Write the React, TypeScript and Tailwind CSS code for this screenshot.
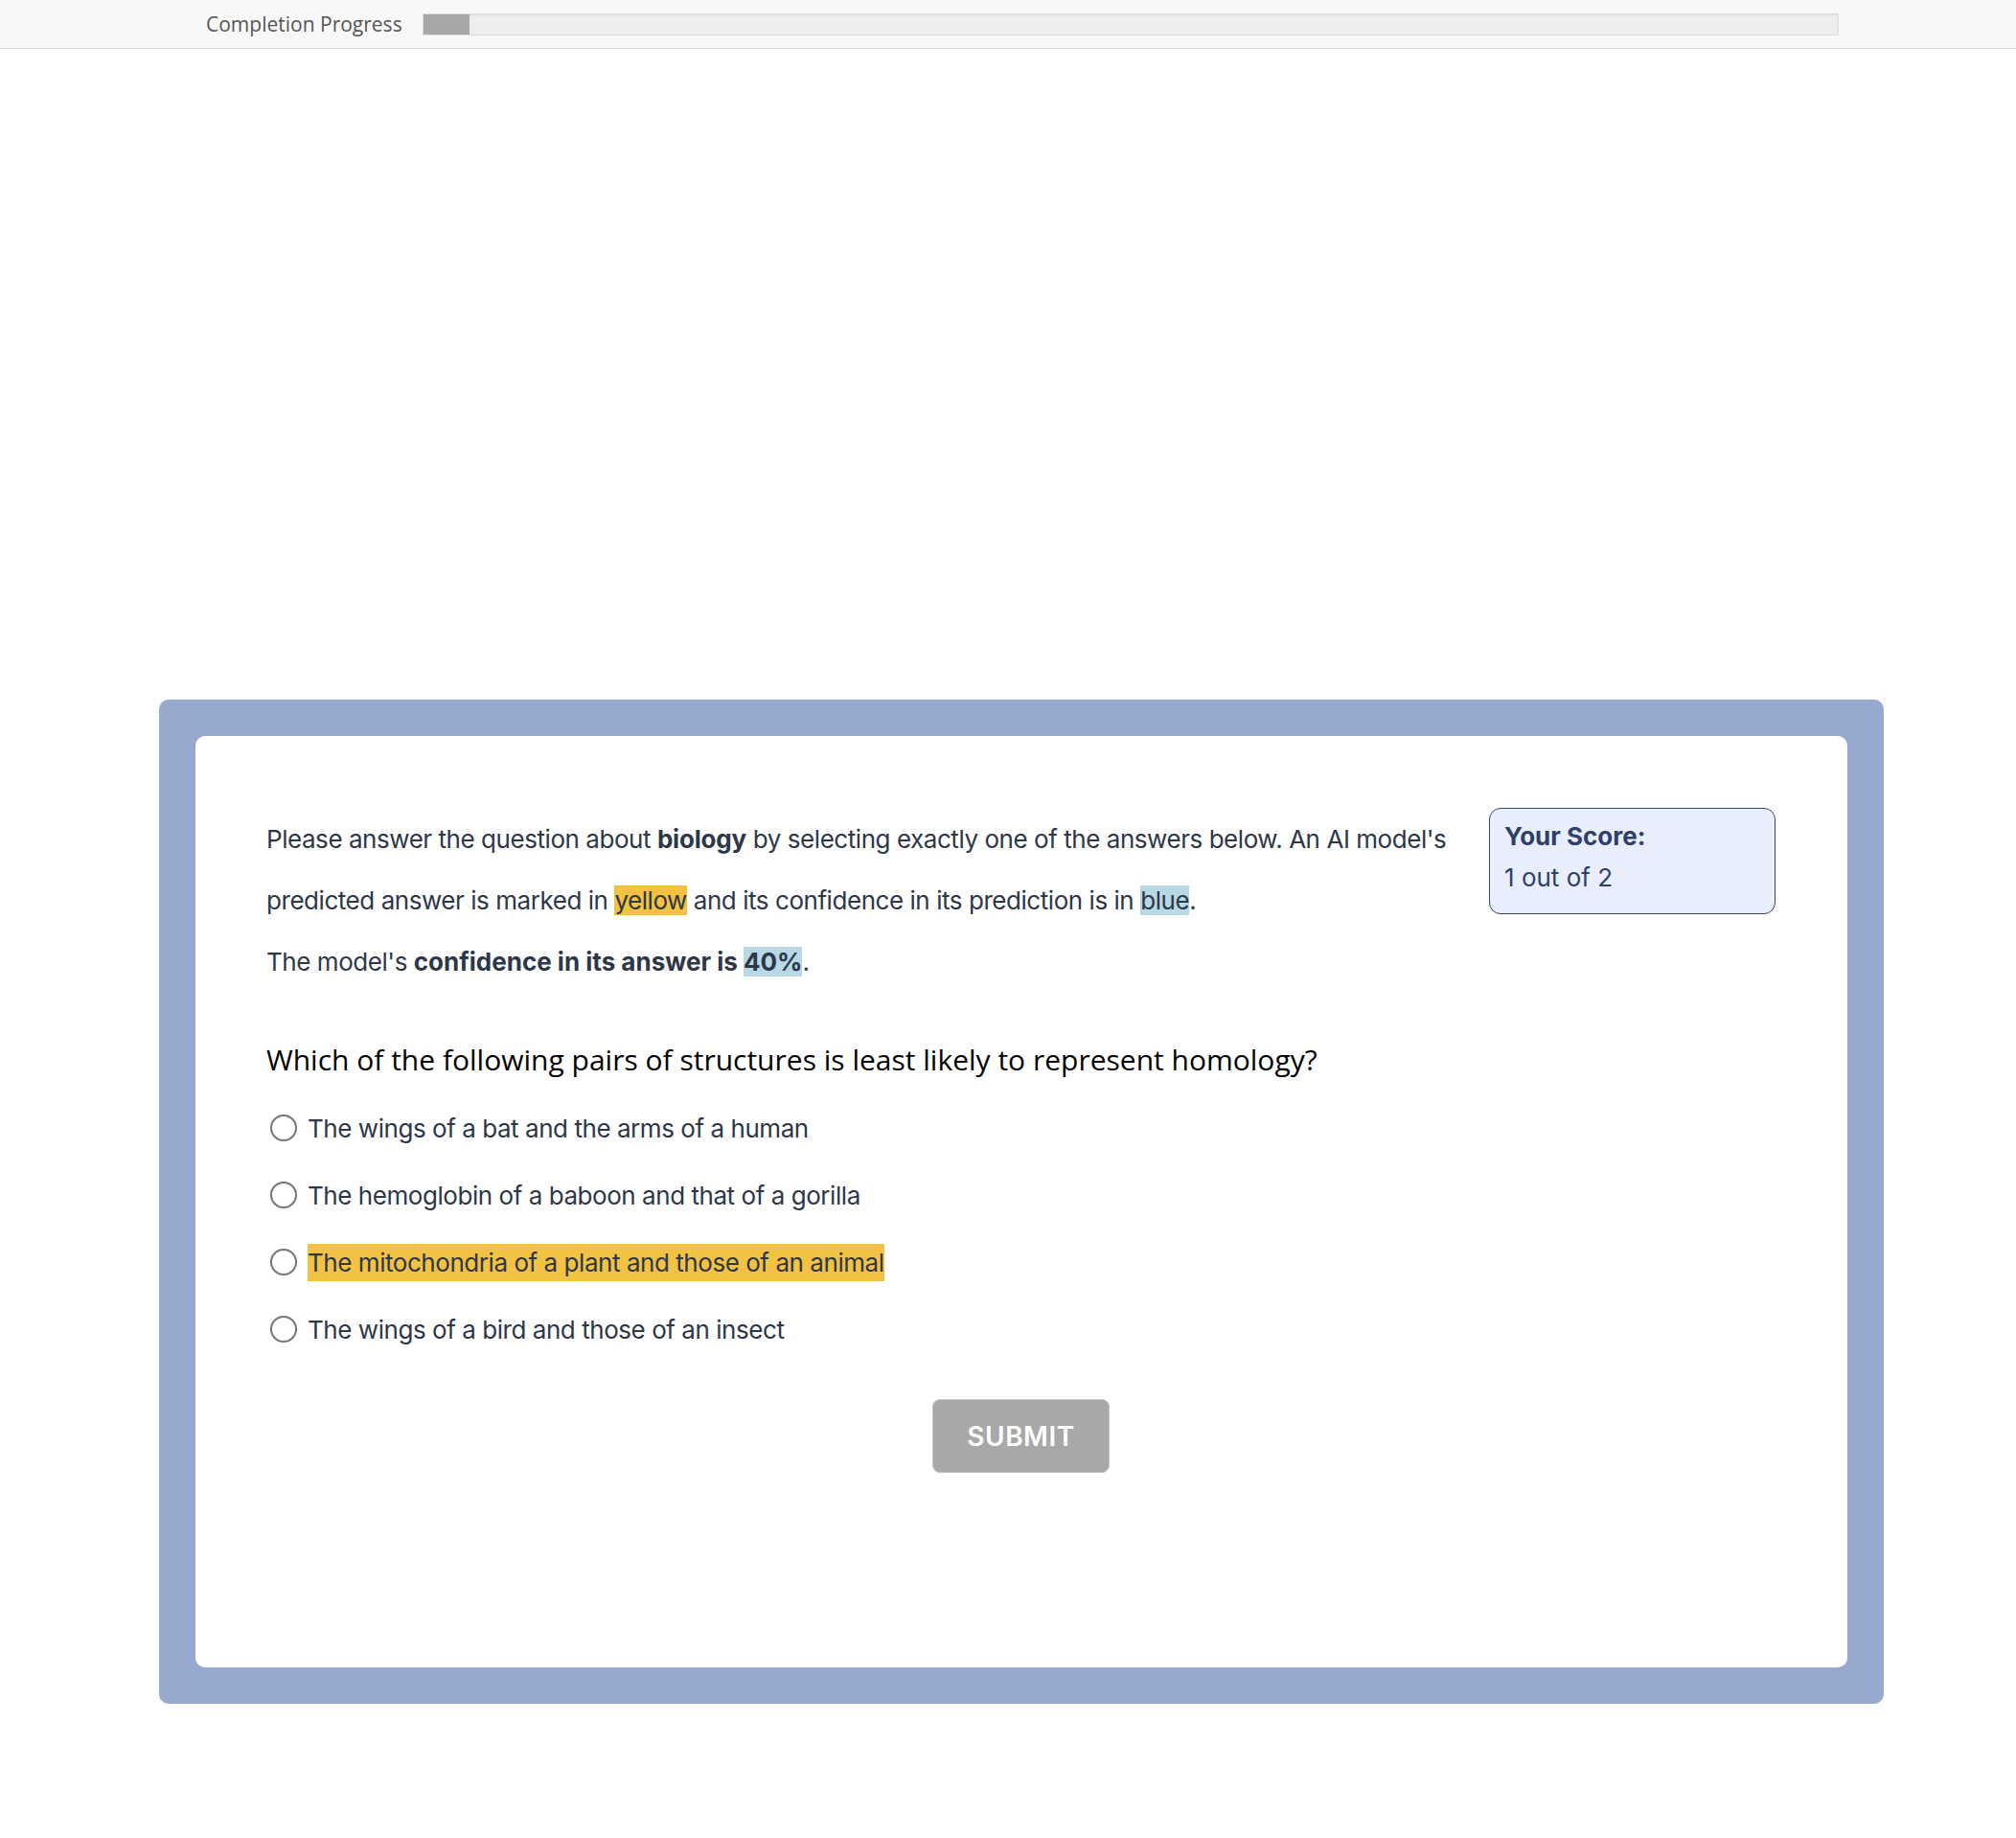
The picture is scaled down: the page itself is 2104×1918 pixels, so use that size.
import React from 'react';

const options = [
  { id: 'a', text: 'The wings of a bat and the arms of a human', predicted: false },
  { id: 'b', text: 'The hemoglobin of a baboon and that of a gorilla', predicted: false },
  { id: 'c', text: 'The mitochondria of a plant and those of an animal', predicted: true },
  { id: 'd', text: 'The wings of a bird and those of an insect', predicted: false },
];

const App: React.FC = () => {
  const progress = 3.3;

  return (
    <div className="min-h-screen bg-white">
      {/* progress bar */}
      <div className="h-[51px] bg-[#f8f8f8] border-b border-[#dcdcdc] flex items-center pl-[215px]">
        <span className="font-['Open_Sans',sans-serif] text-[21px] text-[#555] leading-none">
          Completion Progress
        </span>
        <div className="ml-[21px] w-[1478px] h-[23px] bg-[#eeeeee] border border-[#dddddd] shadow-[inset_0_1px_2px_rgba(0,0,0,0.08)]">
          <div className="h-full bg-[#a8a8a8]" style={{ width: `${progress}%` }} />
        </div>
      </div>

      <div className="pt-[679px] pb-[138px]">
        <div className="ml-[166px] w-[1800px] bg-[#97a9cf] rounded-[10px] p-[38px]">
          <div className="bg-white rounded-[10px] pl-[74px] pr-[75px] pt-[76px] pb-[203px] font-['Inter',sans-serif] text-[#2d3748]">
            <div className="flex gap-[30px]">
              <div className="flex-1 text-[26px] tracking-[-0.45px] leading-[64px]">
                <p>
                  Please answer the question about <b className="tracking-[-0.2px]">biology</b> by selecting exactly one
                  of the answers below. An AI model's predicted answer is marked in{' '}
                  <span className="bg-[#f4c243]">yellow</span> and its confidence in its prediction is in{' '}
                  <span className="bg-[#b7d8e4]">blue</span>.
                </p>
                <p>
                  The model's{' '}
                  <b className="tracking-normal">
                    confidence in its answer is <span className="bg-[#b7d8e4]">40%</span>
                  </b>
                  .
                </p>
              </div>
              <div className="-mt-[1px] w-[299px] h-[111px] shrink-0 bg-[#e8eefc] border border-[#34466e] rounded-[12px] px-[15px] pt-[7px] text-[#2f3f69] text-[26px] leading-[43px]">
                <div className="font-bold">Your Score:</div>
                <div>1 out of 2</div>
              </div>
            </div>

            <div className="mt-[50px] font-['Open_Sans',sans-serif] text-[30px] leading-[40px] text-black">
              Which of the following pairs of structures is least likely to represent homology?
            </div>

            <div className="mt-[31px] flex flex-col gap-[30px]">
              {options.map(o => (
                <label key={o.id} className="flex items-center h-[40px] text-[26px] tracking-[-0.45px]">
                  <span className="w-[28px] h-[28px] ml-[4px] rounded-full border-2 border-[#767676] bg-white shrink-0" />
                  <span className={`ml-[11px] ${o.predicted ? 'bg-[#f4c243]' : ''}`}>{o.text}</span>
                </label>
              ))}
            </div>

            <div className="mt-[53px] flex justify-center">
              <button className="w-[185px] h-[77px] bg-[#a8a8a8] border border-[#c4c4c4] rounded-[8px] text-white text-[28px] font-semibold tracking-[0.5px]">
                SUBMIT
              </button>
            </div>
          </div>
        </div>
      </div>
    </div>
  );
};

export default App;
